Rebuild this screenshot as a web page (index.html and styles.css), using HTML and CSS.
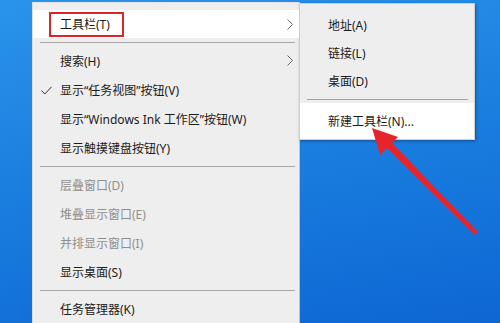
FILE: index.html
```html
<!DOCTYPE html>
<html lang="zh-CN">

<head>
  <meta charset="UTF-8">
  <title>工具栏 菜单</title>
  <link rel="stylesheet" href="styles.css">
</head>

<body>
  <div class="desk">
    <div class="menu">
      <div class="item hot">
        <span class="mark-box"></span>
        <span>工具栏(T)</span>
        <svg class="chev" width="6" height="11" viewBox="0 0 6 11"><polyline points="0.5,0.5 5.5,5.5 0.5,10.5" /></svg>
      </div>
      <div class="sep"></div>
      <div class="item">
        <span>搜索(H)</span>
        <svg class="chev" width="6" height="11" viewBox="0 0 6 11"><polyline points="0.5,0.5 5.5,5.5 0.5,10.5" /></svg>
      </div>
      <div class="item">
        <svg class="check" width="11" height="9" viewBox="0 0 11 9"><polyline points="0.5,4.5 3.8,8 10.5,0.8" /></svg>
        <span>显示“任务视图”按钮(V)</span>
      </div>
      <div class="item"><span>显示“Windows Ink 工作区”按钮(W)</span></div>
      <div class="item"><span>显示触摸键盘按钮(Y)</span></div>
      <div class="sep"></div>
      <div class="item off"><span>层叠窗口(D)</span></div>
      <div class="item off"><span>堆叠显示窗口(E)</span></div>
      <div class="item off"><span>并排显示窗口(I)</span></div>
      <div class="item"><span>显示桌面(S)</span></div>
      <div class="sep"></div>
      <div class="item"><span>任务管理器(K)</span></div>
    </div>

    <div class="sub">
      <div class="item">地址(A)</div>
      <div class="item">链接(L)</div>
      <div class="item">桌面(D)</div>
      <div class="sep"></div>
      <div class="item hot">新建工具栏(N)...</div>
    </div>
  </div>

  <svg class="arrow" width="500" height="323" viewBox="0 0 500 323">
    <polygon points="372,128 398,137 392,143 478,232 475,235 387,148 380,155" />
  </svg>
</body>

</html>
```

FILE: styles.css
```css
:root {
  --menu-bg: #eeeeee;
  --txt-color: #1b1b1b;
  --off-color: #8e8e8e;
  --sep-color: #a5a5a5;
  --red: #d8262b;
}

* {
  margin: 0;
  padding: 0;
  box-sizing: border-box;
}

body {
  width: 500px;
  height: 323px;
  overflow: hidden;
  position: relative;
  font-family: "Noto Sans", "Noto Sans CJK SC", sans-serif;
  font-size: 12px;
  color: var(--txt-color);
  background: linear-gradient(170deg, #2a93ea 0%, #1a80e0 45%, #0e66d3 100%);
}

.desk {
  display: flex;
  align-items: flex-start;
  padding: 2px 0 0 32px;
}

.menu {
  width: 268px;
  height: 340px;
  padding-top: 8px;
  background-color: var(--menu-bg);
  border-left: 1px solid #dcdcdc;
  border-right: 1px solid #c2c2c2;
  border-top: 1px solid #e4e4e4;
}

.menu .item {
  position: relative;
  height: 29px;
  display: flex;
  align-items: center;
  padding-left: 27px;
  line-height: 16px;
  padding-top: 2px;
  white-space: nowrap;
}

.menu .item.hot {
  height: 28px;
  margin-top: -1px;
  background-color: #fff;
}

.menu .item.off {
  color: var(--off-color);
}

.menu .sep {
  height: 8px;
  margin: 0 4px 0 7px;
  display: flex;
  align-items: center;
}

.sep::before {
  content: "";
  flex: 1;
  height: 1px;
  background-color: var(--sep-color);
}

.mark-box {
  position: absolute;
  left: 16px;
  top: 2px;
  width: 75px;
  height: 25px;
  border: 2px solid var(--red);
}

.chev {
  position: absolute;
  right: 6px;
  top: 9px;
  fill: none;
  stroke: #6a6a6a;
  stroke-width: 1;
}

.check {
  position: absolute;
  left: 8px;
  top: 11px;
  fill: none;
  stroke: #333;
  stroke-width: 1;
}

.sub {
  width: 176px;
  margin-top: 1px;
  margin-left: -1px;
  padding-top: 7px;
  background-color: var(--menu-bg);
  border: 1px solid #cfcfcf;
  box-shadow: 1px 1px 3px rgba(0, 0, 0, 0.35);
}

.sub .item {
  height: 28px;
  display: flex;
  align-items: center;
  padding-left: 28px;
  padding-top: 1px;
  line-height: 16px;
  white-space: nowrap;
}

.sub .item.hot {
  height: 36px;
  background-color: #fff;
}

.sub .sep {
  height: 8px;
  margin: 0 6px 0 7px;
  display: flex;
  align-items: center;
}

.arrow {
  position: absolute;
  left: 0;
  top: 0;
  fill: #e8242b;
}
```
